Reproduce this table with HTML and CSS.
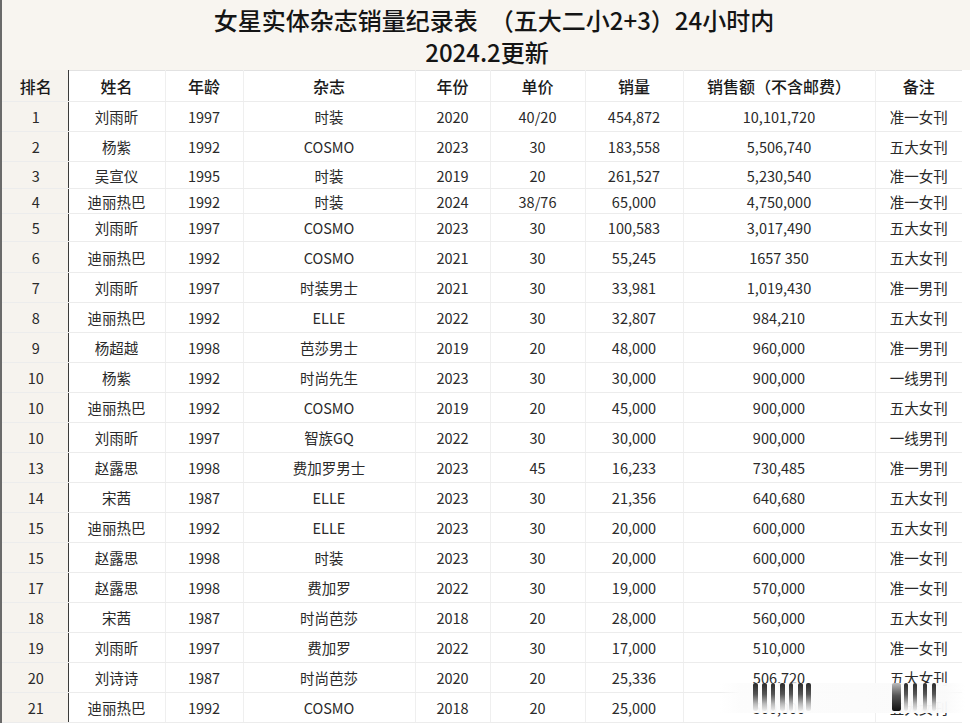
FILE: index.html
```html
<!DOCTYPE html>
<html lang="zh">
<head>
<meta charset="utf-8">
<title>女星实体杂志销量纪录表</title>
<link rel="stylesheet" href="styles.css">
</head>
<body>
<div class="page">
  <header class="title">
    <h1 class="title-main">女星实体杂志销量纪录表　（五大二小2+3）24小时内</h1>
    <div class="title-sub">2024.2更新</div>
  </header>
  <table class="sheet">
    <colgroup>
      <col class="c-rank"><col class="c-name"><col class="c-age"><col class="c-mag"><col class="c-year"><col class="c-price"><col class="c-qty"><col class="c-amt"><col class="c-note">
    </colgroup>
    <thead>
      <tr class="head"><th class="rank">排名</th><th>姓名</th><th>年龄</th><th>杂志</th><th>年份</th><th>单价</th><th>销量</th><th>销售额（不含邮费）</th><th>备注</th></tr>
    </thead>
    <tbody>
      <tr class="r30"><td class="rank">1</td><td>刘雨昕</td><td>1997</td><td>时装</td><td>2020</td><td>40/20</td><td>454,872</td><td>10,101,720</td><td>准一女刊</td></tr>
      <tr class="r30"><td class="rank">2</td><td>杨紫</td><td>1992</td><td>COSMO</td><td>2023</td><td>30</td><td>183,558</td><td>5,506,740</td><td>五大女刊</td></tr>
      <tr class="r27"><td class="rank">3</td><td>吴宣仪</td><td>1995</td><td>时装</td><td>2019</td><td>20</td><td>261,527</td><td>5,230,540</td><td>准一女刊</td></tr>
      <tr class="r25"><td class="rank">4</td><td>迪丽热巴</td><td>1992</td><td>时装</td><td>2024</td><td>38/76</td><td>65,000</td><td>4,750,000</td><td>准一女刊</td></tr>
      <tr class="r28"><td class="rank">5</td><td>刘雨昕</td><td>1997</td><td>COSMO</td><td>2023</td><td>30</td><td>100,583</td><td>3,017,490</td><td>五大女刊</td></tr>
      <tr class="r31"><td class="rank">6</td><td>迪丽热巴</td><td>1992</td><td>COSMO</td><td>2021</td><td>30</td><td>55,245</td><td>1657 350</td><td>五大女刊</td></tr>
      <tr class="r30"><td class="rank">7</td><td>刘雨昕</td><td>1997</td><td>时装男士</td><td>2021</td><td>30</td><td>33,981</td><td>1,019,430</td><td>准一男刊</td></tr>
      <tr class="r30"><td class="rank">8</td><td>迪丽热巴</td><td>1992</td><td>ELLE</td><td>2022</td><td>30</td><td>32,807</td><td>984,210</td><td>五大女刊</td></tr>
      <tr class="r30"><td class="rank">9</td><td>杨超越</td><td>1998</td><td>芭莎男士</td><td>2019</td><td>20</td><td>48,000</td><td>960,000</td><td>准一男刊</td></tr>
      <tr class="r30"><td class="rank">10</td><td>杨紫</td><td>1992</td><td>时尚先生</td><td>2023</td><td>30</td><td>30,000</td><td>900,000</td><td>一线男刊</td></tr>
      <tr class="r30"><td class="rank">10</td><td>迪丽热巴</td><td>1992</td><td>COSMO</td><td>2019</td><td>20</td><td>45,000</td><td>900,000</td><td>五大女刊</td></tr>
      <tr class="r30"><td class="rank">10</td><td>刘雨昕</td><td>1997</td><td>智族GQ</td><td>2022</td><td>30</td><td>30,000</td><td>900,000</td><td>一线男刊</td></tr>
      <tr class="r30"><td class="rank">13</td><td>赵露思</td><td>1998</td><td>费加罗男士</td><td>2023</td><td>45</td><td>16,233</td><td>730,485</td><td>准一男刊</td></tr>
      <tr class="r30"><td class="rank">14</td><td>宋茜</td><td>1987</td><td>ELLE</td><td>2023</td><td>30</td><td>21,356</td><td>640,680</td><td>五大女刊</td></tr>
      <tr class="r30"><td class="rank">15</td><td>迪丽热巴</td><td>1992</td><td>ELLE</td><td>2023</td><td>30</td><td>20,000</td><td>600,000</td><td>五大女刊</td></tr>
      <tr class="r30"><td class="rank">15</td><td>赵露思</td><td>1998</td><td>时装</td><td>2023</td><td>30</td><td>20,000</td><td>600,000</td><td>准一女刊</td></tr>
      <tr class="r30"><td class="rank">17</td><td>赵露思</td><td>1998</td><td>费加罗</td><td>2022</td><td>30</td><td>19,000</td><td>570,000</td><td>准一女刊</td></tr>
      <tr class="r30"><td class="rank">18</td><td>宋茜</td><td>1987</td><td>时尚芭莎</td><td>2018</td><td>20</td><td>28,000</td><td>560,000</td><td>五大女刊</td></tr>
      <tr class="r30"><td class="rank">19</td><td>刘雨昕</td><td>1997</td><td>费加罗</td><td>2022</td><td>30</td><td>17,000</td><td>510,000</td><td>准一女刊</td></tr>
      <tr class="r30"><td class="rank">20</td><td>刘诗诗</td><td>1987</td><td>时尚芭莎</td><td>2020</td><td>20</td><td>25,336</td><td>506,720</td><td>五大女刊</td></tr>
      <tr class="r30"><td class="rank">21</td><td>迪丽热巴</td><td>1992</td><td>COSMO</td><td>2018</td><td>20</td><td>25,000</td><td>500,000</td><td>五大女刊</td></tr>
    </tbody>
  </table>
  <div class="smear" aria-hidden="true">
    <span class="bar b1"></span><span class="bar b2"></span><span class="bar b3"></span><span class="bar b4"></span><span class="bar b5"></span><span class="bar b6"></span><span class="bar b7"></span>
    <span class="bar b8"></span><span class="bar b9"></span><span class="bar b10"></span><span class="bar b11"></span><span class="bar b12"></span>
  </div>
</div>
</body>
</html>
```

FILE: styles.css
```css
html, body {
  margin: 0;
  padding: 0;
  background: #ffffff;
}
body {
  width: 970px;
  height: 723px;
  overflow: hidden;
  font-family: "Noto Sans CJK SC", "Noto Sans", "DejaVu Sans", sans-serif;
  color: #2a2a2a;
}
.page {
  position: relative;
  width: 970px;
  height: 723px;
  box-sizing: border-box;
  border-left: 2px solid #6a6a6a;
  background: #fff;
}
.title {
  height: 70px;
  box-sizing: border-box;
  padding-top: 4px;
  background: #f8f5f0;
  text-align: center;
  color: #151515;
}
.title-main {
  margin: 0;
  font-size: 24px;
  font-weight: 500;
  line-height: 32px;
  padding-left: 16px;
  letter-spacing: 0;
}
.title-sub {
  font-size: 24px;
  font-weight: 500;
  line-height: 32px;
  padding-left: 2px;
}
.sheet {
  border-collapse: collapse;
  table-layout: fixed;
  width: 960px;
  font-size: 14.5px;
}
.c-rank { width: 66px; }
.c-name { width: 97px; }
.c-age { width: 78px; }
.c-mag { width: 172px; }
.c-year { width: 75px; }
.c-price { width: 95px; }
.c-qty { width: 98px; }
.c-amt { width: 192px; }
.c-note { width: 87px; }
.sheet th, .sheet td {
  padding: 0;
  text-align: center;
  vertical-align: middle;
  border-bottom: 1px solid #ececec;
  border-right: 1px solid #efefef;
  white-space: nowrap;
  overflow: hidden;
}
.sheet th {
  font-size: 16px;
  font-weight: 500;
  color: #1a1a1a;
  border-top: 1px solid #e2e2e2;
}
.sheet .rank {
  background: #f6f3ee;
  border-right: 1px solid #3a3a3a;
  border-top-color: #f6f3ee;
  padding-left: 2px;
}
.head { height: 31px; }
.r30 { height: 30px; }
.r31 { height: 31px; }
.r28 { height: 28px; }
.r27 { height: 27px; }
.r25 { height: 25px; }
.sheet td:last-child, .sheet th:last-child {
  border-right: none;
}
.smear {
  position: absolute;
  left: 718px;
  top: 683px;
  width: 245px;
  height: 30px;
  background: linear-gradient(90deg, rgba(255,255,255,0) 0%, rgba(252,252,252,0.96) 8%, rgba(250,250,250,0.97) 92%, rgba(255,255,255,0.6) 100%);
}
.bar {
  position: absolute;
  top: 0;
  width: 5px;
  height: 28px;
  border-radius: 2px;
  background: linear-gradient(180deg, #2a2a2a 0%, #555 40%, #bbb 75%, #eee 100%);
}
.b1 { left: 33px; }
.b2 { left: 42px; }
.b3 { left: 51px; width: 4px; }
.b4 { left: 60px; }
.b5 { left: 69px; width: 4px; }
.b6 { left: 78px; }
.b7 { left: 86px; }
.b8 { left: 172px; width: 9px; background: linear-gradient(180deg, #bbb 0%, #555 45%, #111 100%); }
.b9 { left: 184px; width: 4px; }
.b10 { left: 193px; width: 4px; }
.b11 { left: 203px; width: 4px; }
.b12 { left: 212px; width: 4px; }
```
